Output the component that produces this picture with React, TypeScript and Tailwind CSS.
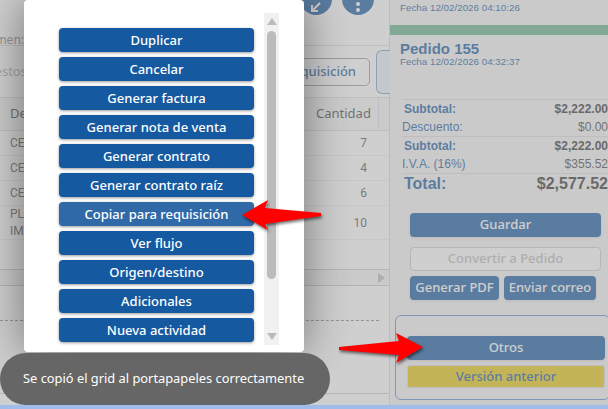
const acciones = [
  "Duplicar",
  "Cancelar",
  "Generar factura",
  "Generar nota de venta",
  "Generar contrato",
  "Generar contrato raíz",
  "Copiar para requisición",
  "Ver flujo",
  "Origen/destino",
  "Adicionales",
  "Nueva actividad",
];

const filas = [
  { desc: "CE", cantidad: 7 },
  { desc: "CE", cantidad: 4 },
  { desc: "CE", cantidad: 6 },
];

const ui = "font-['Noto_Sans',sans-serif]";

function ListadoPanel() {
  return (
    <div className={`w-[390px] shrink-0 border-r border-[#d8d8d8] text-[#444] ${ui}`}>
      <div className="h-[46px] border-b border-[#ddd] flex flex-col">
        <div className="flex justify-end gap-[10px] pr-[15px] -mt-[17px]">
          <div className="w-[32px] h-[32px] rounded-full bg-[#1559a0] flex items-end justify-center pb-[2px] text-white">
            <svg width="12" height="12" viewBox="0 0 12 12" fill="none" stroke="currentColor" strokeWidth="2">
              <path d="M10 2 3 9M2 4v6h6" />
            </svg>
          </div>
          <div className="w-[32px] h-[32px] rounded-full bg-[#1559a0] flex flex-col items-center justify-end gap-[2px] pb-[3px]">
            <span className="w-[4px] h-[4px] rounded-full bg-white" />
            <span className="w-[4px] h-[4px] rounded-full bg-white" />
          </div>
        </div>
        <span className="text-[12px] mt-[16px] -ml-[32px] text-[#888] whitespace-nowrap">Resumen:</span>
      </div>
      <div className="h-[52px] border-b border-[#ddd] flex items-center justify-between">
        <span className="text-[13px] -ml-[56px] pt-[1px] text-[#aaa] whitespace-nowrap">Presupuestos</span>
        <div className="flex items-center gap-[6px] -mr-[7px]">
          <div className="w-[86px] h-[28px] rounded-[5px] border border-[#999] flex items-center justify-end pr-[13px] text-[13px] font-medium text-[#1559a0] bg-white">requisición</div>
          <div className="w-[20px] h-[44px] rounded-l-[6px] border border-r-0 border-[#7f9fd0] bg-[#e8effa]" />
        </div>
      </div>
      <div className="h-[33px] border-b border-[#ddd] bg-[#f6f6f6] flex items-center justify-between text-[13px] text-[#444] pl-[10px]">
        <span>Descripción</span>
        <div className="h-full flex items-center w-[75px] justify-between pl-[2px]">
          <span>Cantidad</span>
          <span className="w-px h-full bg-[#ddd] mr-[10px]" />
        </div>
      </div>
      {filas.map((f, i) => (
        <div key={i} className="h-[25px] border-b border-[#eee] flex items-center justify-between pl-[10px] pr-[22px] text-[12px] font-['Roboto',sans-serif] text-[#555]">
          <span>{f.desc}</span>
          <span>{f.cantidad}</span>
        </div>
      ))}
      <div className="h-[34px] border-b border-[#eee] flex items-center justify-between pl-[10px] pr-[22px] text-[12px] font-['Roboto',sans-serif] text-[#555]">
        <span className="leading-[17px]">PL<br />IM</span>
        <span>10</span>
      </div>
      <div className="h-[29px]" />
      <div className="h-[17px] border-y border-[#c8c8c8] bg-[#f4f4f4] flex items-center justify-end pr-[4px]">
        <div className="w-0 h-0 border-y-[5px] border-y-transparent border-l-[7px] border-l-[#bbb]" />
      </div>
      <div className="h-[35px] border-b border-dashed border-[#888] mr-[10px]" />
      <div className="h-[73px] border-b border-[#ccc]" />
    </div>
  );
}

function FilaTotal({ label, monto, fuerte }: { label: string; monto: string; fuerte?: boolean }) {
  return (
    <div className="flex justify-between h-[18px] items-center text-[12px]">
      <span className={fuerte ? "font-bold text-[#1559a0] pl-[2px]" : "text-[#1559a0]"}>{label}</span>
      <span className={fuerte ? "font-bold text-[#333]" : "text-[#444]"}>{monto}</span>
    </div>
  );
}

function ResumenPanel() {
  return (
    <div className="flex-1 min-w-0 bg-[#f4f4f4] font-['Liberation_Sans',sans-serif] overflow-hidden">
      <div className="h-[25px] pl-[10px] flex flex-col">
        <div className="text-[15px] font-bold leading-[17px] -mt-[14px] text-[#1559a0] whitespace-nowrap">Cotización 244</div>
        <div className="text-[9.8px] leading-[10px] text-[#1559a0]">Fecha 12/02/2026 04:10:26</div>
      </div>
      <div className="h-[10px] bg-[#64b08c]" />
      <div className="pl-[10px] pt-[6px] h-[64px]">
        <div className="text-[15px] font-bold leading-[16px] text-[#1559a0]">Pedido 155</div>
        <div className="text-[9.8px] leading-[10px] text-[#1559a0]">Fecha 12/02/2026 04:32:37</div>
      </div>
      <div className="pl-[12px]">
        <div className="border-t border-[#ddd]">
          <FilaTotal label="Subtotal:" monto="$2,222.00" fuerte />
          <FilaTotal label="Descuento:" monto="$0.00" />
        </div>
        <div className="border-t border-[#ddd]">
          <FilaTotal label="Subtotal:" monto="$2,222.00" fuerte />
          <FilaTotal label="I.V.A. (16%)" monto="$355.52" />
        </div>
        <div className="border-t border-[#ddd] flex justify-between items-center h-[20px] font-bold text-[16px]">
          <span className="text-[#1559a0] pl-[2px]">Total:</span>
          <span className="text-[#333]">$2,577.52</span>
        </div>
      </div>
      <div className={`pl-[20px] pr-[7px] mt-[20px] flex flex-col text-[13px] font-medium ${ui}`}>
        <button className="h-[24px] rounded-[4px] bg-[#1559a0] text-white shadow-sm">Guardar</button>
        <button className="h-[24px] mt-[10px] rounded-[4px] border border-[#ccc] text-[#bbb] bg-white">Convertir a Pedido</button>
        <div className="flex gap-[5px] mt-[5px]">
          <button className="h-[24px] w-[89px] rounded-[4px] bg-[#1559a0] text-white shadow-sm">Generar PDF</button>
          <button className="h-[24px] w-[92px] rounded-[4px] bg-[#1559a0] text-white shadow-sm">Enviar correo</button>
        </div>
      </div>
      <div className={`ml-[5px] -mr-[2px] mt-[15px] h-[85px] rounded-[6px] border border-[#5f8fcc] px-[11px] pt-[20px] flex flex-col gap-[5px] text-[13px] font-medium ${ui}`}>
        <button className="h-[24px] w-[198px] rounded-[4px] bg-[#1559a0] text-white shadow-sm">Otros</button>
        <button className="h-[23px] w-[198px] rounded-[3px] border border-[#ddd] bg-[#e8c810] text-[#1559a0]">Versión anterior</button>
      </div>
    </div>
  );
}

function BarraScroll() {
  return (
    <div className="absolute top-[13px] right-[25px] w-[15px] h-[332px] bg-[#f1f1f1] flex flex-col items-center">
      <div className="mt-[5px] w-0 h-0 border-x-[5px] border-x-transparent border-b-[7px] border-b-[#bbb]" />
      <div className="mt-[6px] w-[9px] h-[248px] rounded-full bg-[#bbb]" />
      <div className="mt-auto mb-[5px] w-0 h-0 border-x-[5px] border-x-transparent border-t-[7px] border-t-[#bbb]" />
    </div>
  );
}

function Flecha({ points }: { points: string }) {
  return (
    <svg className="absolute inset-0 pointer-events-none" width="608" height="409" viewBox="0 0 608 409">
      <polygon points={points} fill="#ff0000" style={{ filter: "drop-shadow(1px 2px 1.5px rgba(0,0,0,0.55))" }} />
    </svg>
  );
}

export default function App() {
  return (
    <div className="relative w-[608px] h-[409px] overflow-hidden bg-white">
      <div className="flex h-[405px]">
        <ListadoPanel />
        <ResumenPanel />
      </div>

      {/* overlay del modal */}
      <div className="absolute inset-0 bg-[rgba(160,160,160,0.5)]" />
      <div className="relative z-10 h-[4px] bg-[#a0bce8]" />

      <div className={`absolute z-10 left-[24px] top-0 w-[280px] h-[352px] bg-white rounded-[4px] shadow-[0_0_45px_rgba(0,0,0,0.45)] ${ui}`}>
        <div className="ml-[35px] pt-[28px] w-[195px] flex flex-col gap-[5px]">
          {acciones.map((a) => (
            <button
              key={a}
              className={`h-[24px] pt-[1px] rounded-[4px] text-white text-[13px] font-medium shadow-[0_1px_3px_rgba(0,0,0,0.4)] ${a === "Copiar para requisición" ? "bg-[#3069a8]" : "bg-[#1559a0]"}`}
            >
              {a}
            </button>
          ))}
        </div>
        <BarraScroll />
      </div>

      <div className={`absolute z-10 left-0 top-[353px] w-[330px] h-[52px] rounded-full bg-[#666] flex items-center pl-[23px] text-white text-[12.85px] ${ui}`}>
        Se copió el grid al portapapeles correctamente
      </div>

      <div className="absolute z-10 inset-0 pointer-events-none">
        <Flecha points="242,215 268,200 265,208 321,213 321,216 265,224 268,230" />
        <Flecha points="339,347 399,341 396,333 423,347 396,363 399,355 339,350" />
      </div>
    </div>
  );
}
